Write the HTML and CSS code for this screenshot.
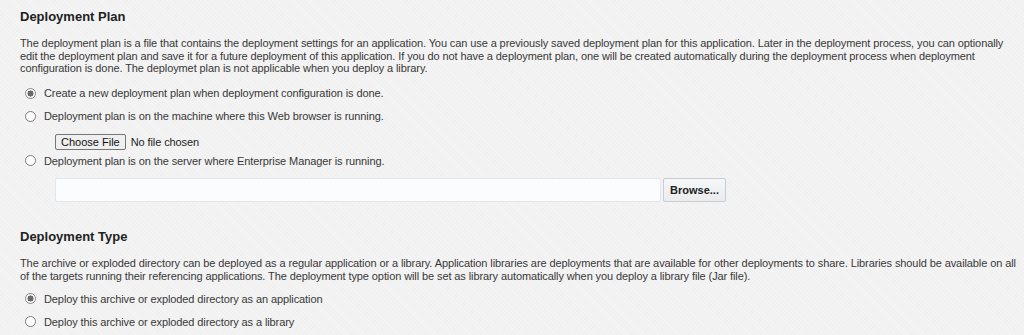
FILE: index.html
```html
<!DOCTYPE html>
<html lang="en">
<head>
    <meta charset="UTF-8">
    <title>Deployment Settings</title>
    <link rel="stylesheet" href="styles.css">
</head>
<body>
    <!-- Deployment plan -->
    <section class="section plan">
        <h2 class="section-title">Deployment Plan</h2>
        <p class="section-text">The deployment plan is a file that contains the deployment settings for an application. You can use a previously saved deployment plan for this application. Later in the deployment process, you can optionally edit the deployment plan and save it for a future deployment of this application. If you do not have a deployment plan, one will be created automatically during the deployment process when deployment configuration is done. The deploymet plan is not applicable when you deploy a library.</p>

        <div class="options">
            <label class="option">
                <input type="radio" name="plan" class="radio" checked>
                <span>Create a new deployment plan when deployment configuration is done.</span>
            </label>
            <label class="option">
                <input type="radio" name="plan" class="radio">
                <span>Deployment plan is on the machine where this Web browser is running.</span>
            </label>
            <div class="file-row">
                <button type="button" class="file-button">Choose File</button>
                <span class="file-name">No file chosen</span>
            </div>
            <label class="option">
                <input type="radio" name="plan" class="radio">
                <span>Deployment plan is on the server where Enterprise Manager is running.</span>
            </label>
            <div class="path-row">
                <input type="text" class="path-input">
                <button type="button" class="browse-button">Browse...</button>
            </div>
        </div>
    </section>

    <!-- Deployment type -->
    <section class="section type">
        <h2 class="section-title">Deployment Type</h2>
        <p class="section-text">The archive or exploded directory can be deployed as a regular application or a library. Application libraries are deployments that are available for other deployments to share. Libraries should be available on all of the targets running their referencing applications. The deployment type option will be set as library automatically when you deploy a library file (Jar file).</p>

        <div class="options">
            <label class="option">
                <input type="radio" name="type" class="radio" checked>
                <span>Deploy this archive or exploded directory as an application</span>
            </label>
            <label class="option">
                <input type="radio" name="type" class="radio">
                <span>Deploy this archive or exploded directory as a library</span>
            </label>
        </div>
    </section>
</body>
</html>
```

FILE: styles.css
```css
/* page */
html, body {
    margin: 0;
    padding: 0;
}

body {
    width: 1024px;
    height: 335px;
    overflow: hidden;
    font-family: "Liberation Sans", Arial, sans-serif;
    font-size: 11px;
    letter-spacing: -0.1px;
    color: #383838;
    background-color: #f3f3f3;
    background-image: repeating-linear-gradient(45deg, #f5f5f5 0 1px, #f1f1f1 1px 3px);
}

.section {
    padding: 0 8px 0 20px;
}

.plan {
    padding-top: 9px;
}

.type {
    padding-top: 27px;
}

.section-title {
    margin: 0;
    font-size: 13px;
    line-height: 16px;
    font-weight: bold;
    letter-spacing: 0;
    color: #222222;
}

.section-text {
    margin: 12px 0 0;
    line-height: 12.5px;
}

/* radio list */
.options {
    display: flex;
    flex-direction: column;
    padding-top: 7px;
}

.type .options {
    padding-top: 5px;
}

.option {
    display: flex;
    align-items: center;
    gap: 8px;
    height: 23px;
    padding-left: 5px;
}

.radio {
    appearance: none;
    margin: 0;
    width: 11px;
    height: 11px;
    border: 1px solid #7a7a7a;
    border-radius: 50%;
    background: #ffffff;
    box-sizing: border-box;
}

.radio:checked {
    border-color: #8a8a8a;
    background: radial-gradient(circle, #6a6a6a 0 2.8px, #ffffff 3.3px);
}

/* file chooser */
.file-row {
    display: flex;
    align-items: center;
    margin-top: 6px;
    padding-left: 35px;
    height: 16px;
}

.file-button {
    height: 16px;
    padding: 0 5px;
    font-family: inherit;
    font-size: 11px;
    color: #111111;
    background: #efefef;
    border: 1px solid #767676;
    border-radius: 2px;
}

.file-name {
    margin-left: 5px;
    font-size: 11px;
    color: #222222;
}

.file-row + .option {
    height: 22px;
}

/* server path */
.path-row {
    display: flex;
    gap: 2px;
    margin-top: 6.5px;
    padding-left: 35px;
}

.path-input {
    width: 606px;
    height: 24px;
    box-sizing: border-box;
    margin: 0;
    background: #fbfcfd;
    border: 1px solid #e3e7eb;
    border-radius: 2px;
}

.browse-button {
    width: 63px;
    height: 24px;
    padding: 0;
    font-family: inherit;
    font-size: 11px;
    font-weight: bold;
    letter-spacing: 0;
    color: #222222;
    background: linear-gradient(#f6f7f8, #e9ebed);
    border: 1px solid #c9cdd1;
    border-radius: 2px;
}
```
